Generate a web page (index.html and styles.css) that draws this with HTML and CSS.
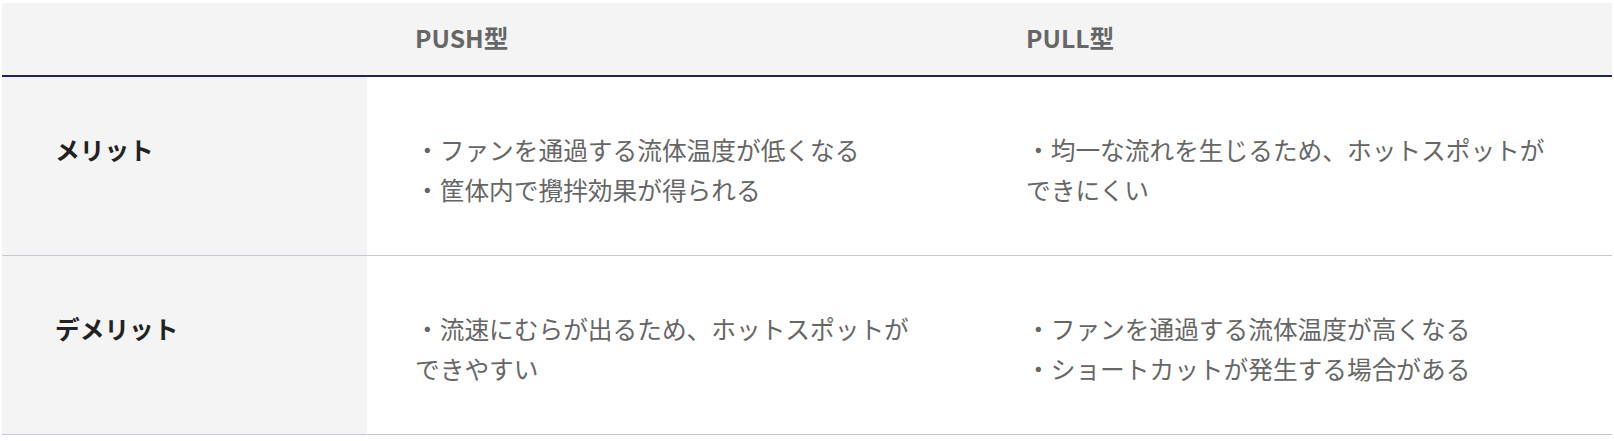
FILE: index.html
```html
<!DOCTYPE html>
<html lang="ja">
<head>
<meta charset="utf-8">
<title>PUSH型 / PULL型</title>
<link rel="stylesheet" href="styles.css">
</head>
<body>
<table class="compare">
  <colgroup>
    <col class="col-label">
    <col class="col-push">
    <col class="col-pull">
  </colgroup>
  <thead>
    <tr>
      <th class="head-cell head-empty"></th>
      <th class="head-cell">PUSH型</th>
      <th class="head-cell">PULL型</th>
    </tr>
  </thead>
  <tbody>
    <tr class="row">
      <th class="label">メリット</th>
      <td class="cell">・ファンを通過する流体温度が低くなる<br>・筐体内で攪拌効果が得られる</td>
      <td class="cell">・均一な流れを生じるため、ホットスポットができにくい</td>
    </tr>
    <tr class="row">
      <th class="label">デメリット</th>
      <td class="cell">・流速にむらが出るため、ホットスポットができやすい</td>
      <td class="cell">・ファンを通過する流体温度が高くなる<br>・ショートカットが発生する場合がある</td>
    </tr>
  </tbody>
</table>
</body>
</html>
```
FILE: styles.css
```css
html, body {
  margin: 0;
  padding: 0;
  background: #ffffff;
}

body {
  padding: 3px 2px 0 2px;
  font-family: "Noto Sans CJK JP", "Noto Sans", sans-serif;
}

.compare {
  width: 1610px;
  border-collapse: collapse;
  table-layout: fixed;
  font-size: 24.7px;
  line-height: 40px;
}

.col-label { width: 365px; }
.col-push { width: 611px; }
.col-pull { width: 634px; }

.head-cell {
  height: 73px;
  box-sizing: border-box;
  padding: 0 48px 4px 48px;
  background: #f4f4f4;
  color: #666666;
  font-weight: 700;
  text-align: left;
  vertical-align: middle;
  border-bottom: 2px solid #1c2466;
}

.row {
  border-bottom: 1px solid #c6c6da;
}

.label {
  background: #f4f4f4;
  color: #222222;
  font-weight: 700;
  text-align: left;
  vertical-align: top;
  padding: 52px 40px 46px 53px;
}

.cell {
  color: #666666;
  vertical-align: top;
  padding: 52px 48px 46px 48px;
  background: #ffffff;
}
```
